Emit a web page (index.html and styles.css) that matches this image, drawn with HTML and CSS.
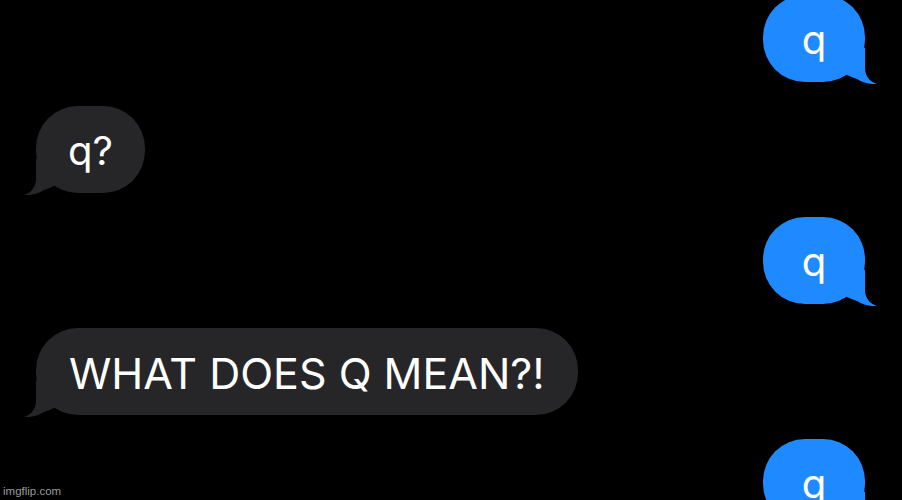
FILE: index.html
```html
<!DOCTYPE html>
<html>
<head>
    <meta charset="UTF-8">
    <meta name="viewport" content="width=device-width, initial-scale=1.0">
    <title>Messages</title>
    <link rel="stylesheet" href="styles.css">
</head>
<body>
    <!-- shared bubble tail, reused by every message -->
    <svg class="defs" width="0" height="0">
        <symbol id="tail" viewBox="0 0 30 36">
            <path d="M0 0 H18 V20 C18 28 23 34 30 36 C24 36.5 16 35 10 31 C6 30 3 28 0 27 Z" fill="currentColor"/>
        </symbol>
    </svg>

    <div class="chat">
        <div class="bubble sent">q<svg class="tail"><use href="#tail"/></svg></div>
        <div class="bubble received">q?<svg class="tail"><use href="#tail"/></svg></div>
        <div class="bubble sent">q<svg class="tail"><use href="#tail"/></svg></div>
        <div class="bubble received loud">WHAT DOES Q MEAN?!<svg class="tail"><use href="#tail"/></svg></div>
        <div class="bubble sent">q<svg class="tail"><use href="#tail"/></svg></div>
    </div>

    <div class="watermark">imgflip.com</div>
</body>
</html>
```

FILE: styles.css
```css
body {
    margin: 0;
    height: 500px;
    overflow: hidden;
    background-color: #000;
    font-family: Inter, "Liberation Sans", Arial, sans-serif;
    position: relative;
}
.defs {
    position: absolute;
}
.chat {
    display: flex;
    flex-direction: column;
    gap: 24px;
    margin-top: -5px;
    padding: 0 37px 0 36px;
}
.bubble {
    position: relative;
    min-width: 102px;
    box-sizing: border-box;
    padding: 21px 32px 18px;
    border-radius: 42px;
    font-size: 40px;
    line-height: 48px;
    color: #fff;
    text-align: center;
}
.sent {
    align-self: flex-end;
    background-color: #1f8aff;
}
.received {
    align-self: flex-start;
    background-color: #262628;
}
.loud {
    padding-left: 33px;
    padding-right: 33px;
    font-size: 43px;
}
.tail {
    position: absolute;
    bottom: -2px;
    width: 30px;
    height: 36px;
}
.sent .tail {
    right: -12px;
    color: #1f8aff;
}
.received .tail {
    left: -12px;
    color: #262628;
    transform: scaleX(-1);
}
.watermark {
    position: absolute;
    left: 3px;
    bottom: 3px;
    font-family: "Liberation Sans", Arial, sans-serif;
    font-size: 11.5px;
    color: #9a9a9a;
}
```
